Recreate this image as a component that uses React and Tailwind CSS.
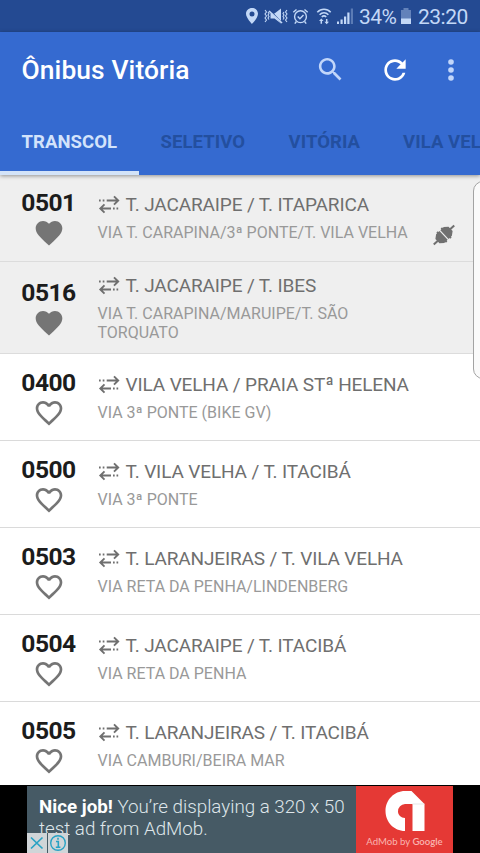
import React from 'react';

const HEART =
  'M12 21.35l-1.45-1.32C5.4 15.36 2 12.28 2 8.5 2 5.42 4.42 3 7.5 3c1.74 0 3.41.81 4.5 2.09C13.09 3.81 14.76 3 16.5 3 19.58 3 22 5.42 22 8.5c0 3.78-3.4 6.86-8.55 11.54L12 21.35z';
const HEART_OUTLINE =
  'M16.5 3c-1.74 0-3.41.81-4.5 2.09C10.91 3.81 9.24 3 7.5 3 4.42 3 2 5.42 2 8.5c0 3.78 3.4 6.86 8.55 11.54L12 21.35l1.45-1.32C18.6 15.36 22 12.28 22 8.5 22 5.42 19.58 3 16.5 3zm-4.4 15.55l-.1.1-.1-.1C7.14 14.24 4 11.39 4 8.5 4 6.5 5.5 5 7.5 5c1.54 0 3.04.99 3.57 2.36h1.87C13.46 5.99 14.96 5 16.5 5c2 0 3.5 1.5 3.5 3.5 0 2.89-3.14 5.74-7.9 10.05z';

const ROUTES = [
  { code: '0501', name: 'T. JACARAIPE / T. ITAPARICA', via: 'VIA T. CARAPINA/3ª PONTE/T. VILA VELHA', fav: true, plug: true, size: 'h-[87px] pt-[17px]', text: 'pt-0' },
  { code: '0516', name: 'T. JACARAIPE / T. IBES', via: 'VIA T. CARAPINA/MARUIPE/T. SÃO TORQUATO', fav: true, size: 'h-[92px] pt-[20px]', text: '-mt-[9px]' },
  { code: '0400', name: 'VILA VELHA / PRAIA STª HELENA', via: 'VIA 3ª PONTE (BIKE GV)', size: 'h-[87px] pt-[18px]', text: 'pt-0' },
  { code: '0500', name: 'T. VILA VELHA / T. ITACIBÁ', via: 'VIA 3ª PONTE', size: 'h-[87px] pt-[18px]', text: 'pt-0' },
  { code: '0503', name: 'T. LARANJEIRAS / T. VILA VELHA', via: 'VIA RETA DA PENHA/LINDENBERG', size: 'h-[87px] pt-[18px]', text: 'pt-0' },
  { code: '0504', name: 'T. JACARAIPE / T. ITACIBÁ', via: 'VIA RETA DA PENHA', size: 'h-[87px] pt-[18px]', text: 'pt-0' },
  { code: '0505', name: 'T. LARANJEIRAS / T. ITACIBÁ', via: 'VIA CAMBURI/BEIRA MAR', size: 'h-[87px] pt-[18px]', text: 'pt-0' },
];

function StatusBar() {
  return (
    <div className="flex h-8 shrink-0 items-center bg-[#244a92] pl-[245px] text-[#c3d8f7]">
      <svg className="h-[18px] w-[14px]" viewBox="0 0 14 18" fill="currentColor">
        <path fillRule="evenodd" d="M7 1C3.600 1 1 3.500 1 6.800 1 11 7 17 7 17s6-6 6-10.200C13 3.500 10.400 1 7 1zm0 3.400a2.500 2.500 0 1 1 0 5 2.500 2.500 0 0 1 0-5z" />
      </svg>
      <svg className="ml-[5px] h-[18px] w-[24px]" viewBox="0 0 24 18" fill="none" stroke="currentColor">
        <path d="M1 3l1.500 2L1 7l1.500 2L1 11l1.500 2L1 15M4 5l1 1.500L4 8l1 1.500L4 11l1 1.500M23 3l-1.500 2L23 7l-1.500 2L23 11l-1.500 2L23 15M20 5l-1 1.500L20 8l-1 1.500 1 1.500-1 1.500" strokeWidth="1.100" />
        <path d="M6.500 6.500h4L17 1.500v15l-6.500-5h-4z" fill="currentColor" stroke="none" />
        <path d="M5.500 3l12 12.500" stroke="#244a92" strokeWidth="1.500" />
        <path d="M5 4l13 12" strokeWidth="1.700" />
      </svg>
      <svg className="ml-[4px] h-[17px] w-[17px]" viewBox="0 0 17 17" fill="none" stroke="currentColor" strokeWidth="1.400">
        <circle cx="8.500" cy="8.700" r="5.900" />
        <path d="M1.300 4.300l3.200-2.800M15.700 4.300l-3.200-2.800M4.400 13.500l-1.600 2.200M12.600 13.500l1.600 2.200M5.700 8.500l2.200 2.200 3.600-3.700" />
      </svg>
      <svg className="ml-[7px] h-[18px] w-[16px]" viewBox="0 0 16 18" fill="none" stroke="currentColor" strokeWidth="1.600">
        <path d="M1.300 5.200c3.800-4 9.600-4 13.400 0M3.600 7.700c2.600-2.700 6.200-2.700 8.800 0M5.800 10c1.300-1.300 3.100-1.300 4.400 0" />
        <path d="M5.300 16.800v-3.500M10.700 12v3.500" strokeWidth="1.500" />
        <path d="M3 14l2.300-2.500L7.600 14zM8.400 14.700h4.600l-2.300 2.600z" fill="currentColor" stroke="none" />
      </svg>
      <svg className="ml-[4px] h-[18px] w-[18px]" viewBox="0 0 18 18" fill="currentColor">
        <path d="M1 14.500h2V17H1zM4.500 12.500h2.200V17H4.500zM8 9.500h2.200V17H8zM11.300 5.500h2.200V17h-2.200z" />
        <path d="M14.800 1.500H17V17h-2.200z" opacity=".35" />
      </svg>
      <span className="ml-[5px] w-[38px] whitespace-nowrap pt-[1px] text-[21px] leading-8 tracking-[-0.500px]">34%</span>
      <svg className="ml-[3px] h-[17px] w-[12px]" viewBox="0 0 12 17" fill="currentColor">
        <path d="M3.500 0h5v2H11v9H1V2h2.500z" opacity=".4" />
        <path d="M1 10.500h10V16H1z" />
      </svg>
      <span className="ml-[6px] whitespace-nowrap pt-[1px] text-[21px] leading-8 tracking-[-0.500px]">23:20</span>
    </div>
  );
}

function AppBar() {
  return (
    <div className="relative z-10 flex h-[143px] shrink-0 flex-col bg-[#356ad0] shadow-[0_1px_4px_rgba(0,0,0,0.4)]">
      <div className="flex h-[77px] items-center pl-[21.500px] text-white">
        <h1 className="w-[293.500px] whitespace-nowrap text-[26.400px] font-medium tracking-[0.100px]">Ônibus Vitória</h1>
        <svg className="h-[31px] w-[31px] -translate-y-[1px] text-[#c2d6fa]" viewBox="0 0 24 24" fill="currentColor">
          <path d="M15.500 14h-.79l-.28-.27C15.410 12.590 16 11.110 16 9.500 16 5.910 13.090 3 9.500 3S3 5.910 3 9.500 5.910 16 9.500 16c1.610 0 3.090-.59 4.230-1.570l.27.28v.79l5 4.990L20.490 19l-4.990-5zm-6 0C7.010 14 5 11.990 5 9.500S7.010 5 9.500 5 14 7.010 14 9.500 11.990 14 9.500 14z" />
        </svg>
        <svg className="ml-[33px] h-[32px] w-[32px] -translate-y-[1px]" viewBox="0 0 24 24" fill="currentColor">
          <path d="M17.650 6.350C16.200 4.900 14.210 4 12 4c-4.420 0-7.990 3.580-7.990 8s3.570 8 7.990 8c3.730 0 6.840-2.550 7.730-6h-2.080c-.82 2.330-3.040 4-5.650 4-3.310 0-6-2.690-6-6s2.690-6 6-6c1.660 0 3.140.69 4.220 1.780L13 11h7V4l-2.350 2.350z" />
        </svg>
        <svg className="ml-[24px] h-[32px] w-[32px] -translate-y-[1px] text-[#c2d6fa]" viewBox="0 0 24 24" fill="currentColor">
          <circle cx="12" cy="6" r="2.100" /><circle cx="12" cy="12" r="2.100" /><circle cx="12" cy="18" r="2.100" />
        </svg>
      </div>
      <div className="flex h-[66px] overflow-hidden whitespace-nowrap text-[18.500px] font-bold leading-[66px] tracking-[0.080px] text-[#234f9f]">
        <div className="w-[139px] shrink-0 border-b-[4px] border-[#d3e3f8] pl-[21.500px] text-[#d3e3fb]">TRANSCOL</div>
        <div className="w-[128px] shrink-0 pl-[21.500px]">SELETIVO</div>
        <div className="w-[114px] shrink-0 pl-[21.500px]">VITÓRIA</div>
        <div className="shrink-0 pl-[22px]">VILA VELHA</div>
      </div>
    </div>
  );
}

function SwapIcon() {
  return (
    <svg className="h-[20px] w-[22px] shrink-0 -translate-y-[1px]" viewBox="0 0 22 20" fill="none" stroke="currentColor" strokeWidth="1.900">
      <path d="M8.700 5.500H20M16 1.300L20.200 5.500l-4.200 4.200M13 13.500H2.500M6.500 9.300L2.300 13.500l4.200 4.200" />
      <path d="M1 5.500h1.700M4.700 5.500h1.700M15 13.500h1.700M18.500 13.500h1.700" />
    </svg>
  );
}

function PlugIcon() {
  return (
    <svg className="mt-[31px] ml-[3px] h-[24px] w-[24px] shrink-0 overflow-visible text-[#707070]" viewBox="0 0 24 24">
      <g transform="translate(12 12) rotate(-43)" fill="currentColor">
        <path d="M-14-1h6v2h-6zM8-1h6v2H8z" />
        <path d="M-.6-6V6h-1.300V7h-2V6h-1.300L-9 3V-3l3.800-3h1.300v-1h2v1zM.6-6V6h1.300V7h2V6h1.300L9 3V-3L5.200-6H3.900v-1h-2v1z" />
      </g>
    </svg>
  );
}

function Route({ route }) {
  return (
    <div className={`flex shrink-0 border-b pl-[21.500px] ${route.size} ${route.fav ? 'border-[#dcdcdc] bg-[#efefef]' : 'border-[#dadada] bg-white'}`}>
      <div className="flex w-[54px] shrink-0 flex-col items-center">
        <span className="text-[24.600px] font-bold leading-[21px] tracking-[-0.500px] text-[#1c1c1c]">{route.code}</span>
        <svg className="mt-[4px] h-8 w-8 shrink-0 text-[#757575]" viewBox="0 0 24 24" fill="currentColor">
          <path d={route.fav ? HEART : HEART_OUTLINE} />
        </svg>
      </div>
      <div className={`ml-[22px] w-[325px] shrink-0 ${route.text}`}>
        <div className="flex h-[27px] items-center gap-[6px] whitespace-nowrap text-[19px] tracking-[-0.130px] text-[#6f6f6f]">
          <SwapIcon />
          <span>{route.name}</span>
        </div>
        <p className="mt-[4px] w-[320px] text-[16px] leading-[19px] text-[#999]">{route.via}</p>
      </div>
      {route.plug && <div className="ml-[6px]"><PlugIcon /></div>}
    </div>
  );
}

function AdBanner() {
  return (
    <div className="relative z-10 flex h-[68px] shrink-0 border-t border-black bg-black">
      <div className="relative ml-[27px] w-[329px] bg-[#465a65] pl-[12px] pt-[10px] text-[18.750px] font-light leading-[22px] text-[#dfe6ea]">
        <p className="whitespace-nowrap"><span className="font-bold text-white">Nice job!</span> You’re displaying a 320 x 50</p>
        <p className="whitespace-nowrap">test ad from AdMob.</p>
        <div className="absolute bottom-0 left-0 flex h-[20px] w-[41px] bg-[#d0d5d8] text-[#27a2c4]">
          <svg className="h-[20px] w-[20px]" viewBox="0 0 20 20" fill="none" stroke="currentColor" strokeWidth="1.700">
            <path d="M4 4.500l11.500 11M15.500 4.500L4 15.500" />
          </svg>
          <div className="w-px bg-[#465a65]" />
          <svg className="h-[20px] w-[20px]" viewBox="0 0 20 20" fill="none" stroke="currentColor">
            <circle cx="10" cy="10" r="7.300" strokeWidth="1.400" />
            <path d="M8 8.500h2.300V14M7.800 14.200h4.600M10 4.700v2" strokeWidth="1.600" />
          </svg>
        </div>
      </div>
      <div className="flex w-[97px] flex-col items-center bg-[#e53935]">
        <svg className="mt-[5px] h-[41px] w-[40px]" viewBox="0 0 40 41" fill="#fff">
          <path d="M20 0h6.500L39.500 13v27H27.500V13H20a7.500 7.500 0 0 0-7 7.500c0 3.500 3 6.500 7 6.500v13C9 40 .5 31 .5 20S9 0 20 0z" />
          <path d="M27.500 13h12" stroke="#ddd" strokeWidth=".7" />
        </svg>
        <span className="mt-[4px] whitespace-nowrap font-['Lato'] text-[9.600px] leading-[12px] text-[#f9b5b1]">AdMob by <span className="font-semibold">Google</span></span>
      </div>
    </div>
  );
}

export default function App() {
  return (
    <div className="relative flex h-[853px] w-[480px] flex-col overflow-hidden bg-white font-['Roboto',sans-serif]">
      <StatusBar />
      <AppBar />
      <div className="flex h-[610px] shrink-0 flex-col overflow-hidden">
        {ROUTES.map((r) => <Route key={r.code} route={r} />)}
      </div>
      <AdBanner />
      <div className="absolute top-[181px] left-[473px] h-[198px] w-[20px] rounded-l-[10px] border border-[#a3a3a3] bg-[#fafafa]" />
    </div>
  );
}
